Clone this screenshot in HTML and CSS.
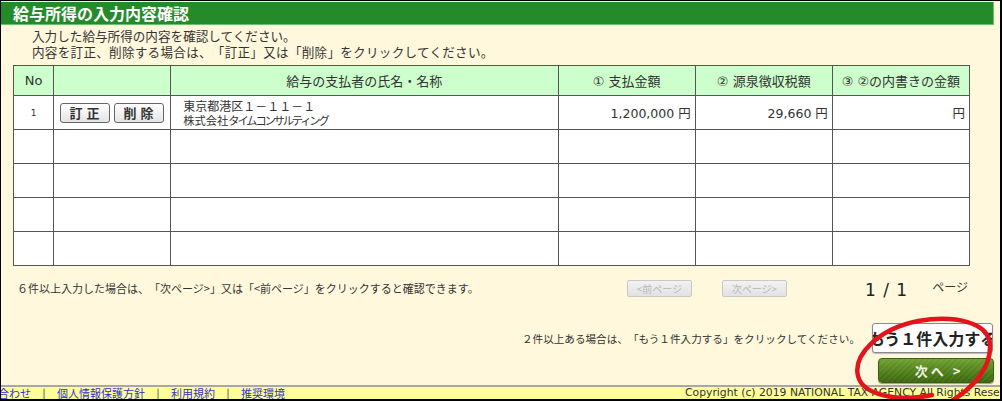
FILE: index.html
```html
<!DOCTYPE html>
<html lang="ja">
<head>
<meta charset="utf-8">
<title>給与所得の入力内容確認</title>
<link rel="stylesheet" href="styles.css">
</head>
<body>
<div class="frame">
  <div class="page">
    <div class="titlebar"><h1>給与所得の入力内容確認</h1></div>
    <div class="intro">
      <p>入力した給与所得の内容を確認してください。</p>
      <p class="wide">内容を訂正、削除する場合は、「訂正」又は「削除」をクリックしてください。</p>
    </div>
    <table class="list">
      <colgroup>
        <col class="c-no"><col class="c-act"><col class="c-name"><col class="c-amt"><col class="c-amt"><col class="c-amt">
      </colgroup>
      <thead>
        <tr><th>No</th><th></th><th>給与の支払者の氏名・名称</th><th>① 支払金額</th><th>② 源泉徴収税額</th><th>③ ②の内書きの金額</th></tr>
      </thead>
      <tbody>
        <tr>
          <td class="no">1</td>
          <td class="act"><button class="small-btn">訂正</button><button class="small-btn">削除</button></td>
          <td class="name"><div>東京都港区１－１１－１</div><div class="corp">株式会社<span class="kana">タイムコンサルティング</span></div></td>
          <td class="amt">1,200,000 円</td>
          <td class="amt">29,660 円</td>
          <td class="amt">円</td>
        </tr>
        <tr><td></td><td></td><td></td><td></td><td></td><td></td></tr>
        <tr><td></td><td></td><td></td><td></td><td></td><td></td></tr>
        <tr><td></td><td></td><td></td><td></td><td></td><td></td></tr>
        <tr><td></td><td></td><td></td><td></td><td></td><td></td></tr>
      </tbody>
    </table>
    <div class="pager">
      <p class="pager-note">６件以上入力した場合は、「次ページ&gt;」又は「&lt;前ページ」をクリックすると確認できます。</p>
      <button class="page-btn" disabled>&lt;前ページ</button>
      <button class="page-btn" disabled>次ページ&gt;</button>
      <span class="count">1 / 1</span>
      <span class="page-label">ページ</span>
    </div>
    <div class="addrow">
      <p class="add-note">２件以上ある場合は、「もう１件入力する」をクリックしてください。</p>
      <button class="add-btn"><span>もう１件入力する</span></button>
    </div>
    <div class="nextrow">
      <button class="next-btn">次へ &gt;</button>
    </div>
    <footer class="footer">
      <div class="links">
        <a href="#">お問い合わせ</a><span class="sep">|</span><a href="#">個人情報保護方針</a><span class="sep">|</span><a href="#">利用規約</a><span class="sep">|</span><a href="#">推奨環境</a>
      </div>
      <div class="copy">Copyright (c) 2019 NATIONAL TAX AGENCY All Rights Reserved.</div>
    </footer>
    <svg class="mark" viewBox="1 1 999 398" width="999" height="398" aria-hidden="true">
      <path d="M 932 395 C 900 402, 863 396, 858 376 C 853 355, 878 329, 918 321 C 955 315, 989 322, 990 345 C 991 366, 976 386, 950 402" fill="none" stroke="#e3141b" stroke-width="4.5" stroke-linecap="round"/>
    </svg>
  </div>
</div>
</body>
</html>
```

FILE: styles.css
```css
html, body {
  margin: 0;
  padding: 0;
}
body {
  background: #000;
  width: 1002px;
  height: 401px;
  overflow: hidden;
  font-family: "DejaVu Sans", "Noto Sans CJK JP", sans-serif;
  color: #333;
  text-spacing-trim: space-all;
}
.frame {
  box-sizing: border-box;
  height: 401px;
  padding: 1px 2px 2px 1px;
}
.page {
  position: relative;
  height: 398px;
  background: #fff8dc;
  overflow: hidden;
  display: flex;
  flex-direction: column;
}
.titlebar {
  height: 22px;
  margin-top: 1px;
  margin-right: 6px;
  background: #258a2a;
  border-right: 1px solid #6cc06c;
  border-bottom: 1px solid #6cc06c;
}
.titlebar h1 {
  margin: 0;
  padding-left: 12px;
  font-family: "Noto Sans CJK JP", sans-serif;
  font-size: 16px;
  font-weight: bold;
  line-height: 22px;
  color: #fff;
}
.intro {
  margin-top: 3px;
  padding-left: 31px;
  font-family: "Noto Sans CJK JP", sans-serif;
  font-size: 12.6px;
  line-height: 16px;
  color: #333;
}
.intro p {
  margin: 0;
}
.intro p.wide {
  letter-spacing: 0.25px;
}
.list {
  margin: 5px 0 0 12px;
  border-collapse: collapse;
  table-layout: fixed;
  width: 957px;
  font-family: "DejaVu Sans", "Noto Sans CJK JP", sans-serif;
}
.c-no { width: 40px; }
.c-act { width: 117px; }
.c-name { width: 387px; }
.c-amt { width: 137px; }
.list th, .list td {
  border: 1px solid #555;
  padding: 0;
}
.list th {
  height: 29px;
  background: #ccffcc;
  font-weight: normal;
  font-size: 13px;
  font-family: "DejaVu Sans", "Noto Sans CJK JP", sans-serif;
  color: #333;
  text-align: center;
}
.list td {
  height: 33px;
  background: #fff;
  font-size: 12.5px;
}
.list td.no {
  text-align: center;
  font-size: 9px;
}
.list td.act {
  padding-left: 6px;
}
.small-btn {
  box-sizing: border-box;
  width: 50px;
  height: 20px;
  margin: 0 4px 0 0;
  padding: 0 0 0 3px;
  border: 1px solid #666;
  border-radius: 3px;
  background: linear-gradient(#ffffff, #e4e4e4);
  font-family: "Noto Sans CJK JP", sans-serif;
  font-size: 13px;
  font-weight: bold;
  letter-spacing: 4px;
  line-height: 18px;
  color: #333;
}
.list td.name {
  padding-left: 12px;
  font-family: "Noto Sans CJK JP", sans-serif;
  font-size: 12px;
  line-height: 14px;
}
.list td.name .corp {
  font-size: 11.3px;
}
.list td.name .kana {
  letter-spacing: -2.2px;
}
.list td.amt {
  text-align: right;
  padding-right: 4px;
}
.pager {
  display: flex;
  align-items: center;
  height: 20px;
  margin-top: 12px;
  padding-left: 16px;
}
.pager-note {
  flex: 0 0 610px;
  margin: 0;
  font-family: "Noto Sans CJK JP", sans-serif;
  font-size: 11px;
  color: #333;
  white-space: nowrap;
}
.page-btn {
  box-sizing: border-box;
  width: 65px;
  height: 17px;
  margin: 0 30px 0 0;
  padding: 0;
  border: 1px solid #c8c8c8;
  border-radius: 2px;
  background: linear-gradient(#f2f2f2, #e2e2e2);
  font-family: "Noto Sans CJK JP", sans-serif;
  font-size: 10px;
  line-height: 15px;
  color: #b8b8b8;
}
.count {
  margin-left: 48px;
  font-size: 17px;
  color: #222;
  letter-spacing: 1px;
  padding-top: 4px;
}
.page-label {
  margin-left: 24px;
  font-family: "Noto Sans CJK JP", sans-serif;
  font-size: 12px;
  color: #333;
  padding-bottom: 4px;
}
.addrow {
  display: flex;
  justify-content: flex-end;
  align-items: center;
  margin-top: 25px;
  margin-right: 7px;
}
.add-note {
  flex: none;
  margin: 0 12px 0 0;
  font-family: "Noto Sans CJK JP", sans-serif;
  font-size: 10.6px;
  color: #333;
  white-space: nowrap;
}
.add-btn {
  flex: none;
  box-sizing: border-box;
  width: 121px;
  min-width: 0;
  height: 30px;
  padding: 0;
  border: 1px solid #8a8a8a;
  border-radius: 3px;
  background: #fff;
  box-shadow: 0 1px 1px #bbb;
  overflow: hidden;
  display: flex;
  justify-content: center;
  align-items: center;
}
.add-btn span {
  flex: none;
  font-family: "Noto Sans CJK JP", sans-serif;
  font-size: 16px;
  font-weight: bold;
  color: #222;
  white-space: nowrap;
}
.nextrow {
  display: flex;
  justify-content: flex-end;
  margin-top: 5px;
  margin-right: 6px;
}
.next-btn {
  box-sizing: border-box;
  width: 116px;
  height: 25px;
  padding: 0 0 0 6px;
  border: 1px solid #3b6210;
  border-radius: 4px;
  background:
    repeating-linear-gradient(135deg, rgba(255,255,255,0.06) 0 2px, rgba(0,0,0,0) 2px 4px),
    linear-gradient(#6f9f2e, #4c7c17 60%, #3c650f);
  font-family: "Noto Sans CJK JP", sans-serif;
  font-size: 13px;
  font-weight: bold;
  letter-spacing: 3px;
  color: #eef4e4;
  box-shadow: 0 1px 1px #999;
}
.footer {
  margin-top: auto;
  height: 12px;
  border-top: 2px solid #a8a8a0;
  background: #ffff99;
  display: flex;
  overflow: hidden;
  font-family: "DejaVu Sans", "Noto Sans CJK JP", sans-serif;
  font-size: 11px;
  line-height: 12px;
  white-space: nowrap;
}
.links {
  flex: 0 0 720px;
  margin-left: -36px;
  font-family: "Noto Sans CJK JP", sans-serif;
}
.links a {
  color: #3030d0;
  text-decoration: underline;
}
.links .sep {
  display: inline-block;
  width: 26px;
  text-align: center;
  color: #333;
}
.copy {
  flex: none;
  font-size: 10.8px;
  color: #333;
}
.mark {
  position: absolute;
  left: 0;
  top: 0;
  pointer-events: none;
}
```
